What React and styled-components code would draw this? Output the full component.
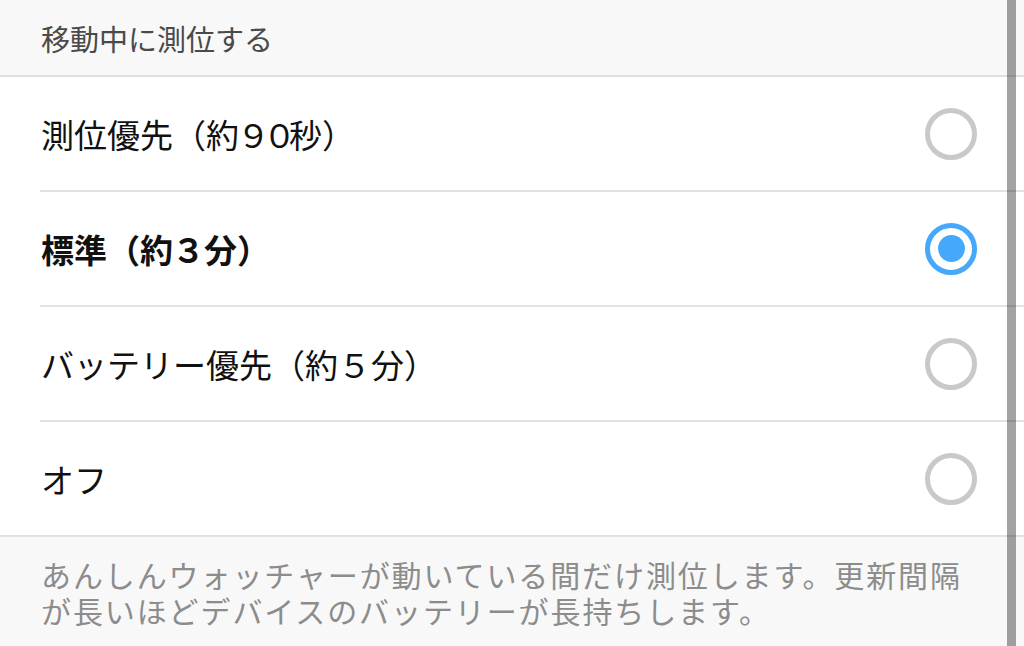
import styled, { createGlobalStyle } from 'styled-components';

const GlobalStyle = createGlobalStyle`
	html, body {
		margin: 0;
		padding: 0;
		background: #fff;
	}
	body {
		font-family: 'Noto Sans CJK JP', 'Noto Sans', sans-serif;
	}
`
const Page = styled.div`
	position: relative;
	height: 646px;
	overflow: hidden;
	background: #fff;
`
const SectionHeader = styled.div`
	display: flex;
	align-items: center;
	height: 73px;
	padding: 1px 0 1px 41px;
	background: #f8f8f8;
	border-bottom: 2px solid #e0e0e0;
	font-size: 29px;
	color: #4a4a4a;
`
const OptionList = styled.ul`
	list-style: none;
	margin: 0;
	padding: 0;
`
const OptionRow = styled.li`
	padding-left: 40px;
	background: #fff;
	cursor: pointer;
`
const RowInner = styled.div`
	display: flex;
	align-items: center;
	justify-content: space-between;
	height: 113px;
	padding-right: 47px;
	border-bottom: ${p => p.$last ? 'none' : '2px solid #e2e2e2'};
`
const Label = styled.span`
	font-size: 33px;
	font-weight: ${p => p.$bold ? 700 : 400};
	color: #111;
	padding-left: 1px;
`
const Digits = styled.span`
	margin-left: ${p => p.$shift}px;
	letter-spacing: ${p => p.$tight}px;
`
const Radio = styled.span`
	display: flex;
	align-items: center;
	justify-content: center;
	width: 52px;
	height: 52px;
	box-sizing: border-box;
	border-radius: 50%;
	border: 5px solid ${p => p.$on ? '#45a8fa' : '#c9c9c9'};
`
const Dot = styled.span`
	width: 27px;
	height: 27px;
	border-radius: 50%;
	background: #45a8fa;
`
const Note = styled.p`
	margin: 0;
	padding: 19px 41px;
	background: #f8f8f8;
	border-top: 2px solid #e2e2e2;
	font-size: 30px;
	letter-spacing: 1.9px;
	line-height: 36px;
	color: #8c8c8c;
`
const ScrollBar = styled.div`
	position: absolute;
	top: 0;
	bottom: 0;
	right: 8px;
	width: 9px;
	background: rgba(0, 0, 0, 0.36);
`

const options = [
	{ head: '測位優先（約', num: '９０', tail: '秒）', shift: -2, tight: -7 },
	{ head: '標準（約', num: '３', tail: '分）', shift: -1, tight: -1, on: true },
	{ head: 'バッテリー優先（約', num: '５', tail: '分）', shift: 0, tight: 0 },
	{ head: 'オフ', num: '', tail: '', shift: 0, tight: 0 },
]

const App = () => {
	return (
		<Page>
			<GlobalStyle />
			<SectionHeader>移動中に測位する</SectionHeader>
			<OptionList>
				{options.map((o, i) => (
					<OptionRow key={o.head}>
						<RowInner $last={i === options.length - 1}>
							<Label $bold={o.on}>
								{o.head}
								{o.num && <Digits $shift={o.shift} $tight={o.tight}>{o.num}</Digits>}
								{o.tail}
							</Label>
							<Radio $on={o.on}>{o.on && <Dot />}</Radio>
						</RowInner>
					</OptionRow>
				))}
			</OptionList>
			<Note>
				あんしんウォッチャーが動いている間だけ測位します。更新間隔<br />
				が長いほどデバイスのバッテリーが長持ちします。
			</Note>
			<ScrollBar />
		</Page>
	)
}

export default App;
